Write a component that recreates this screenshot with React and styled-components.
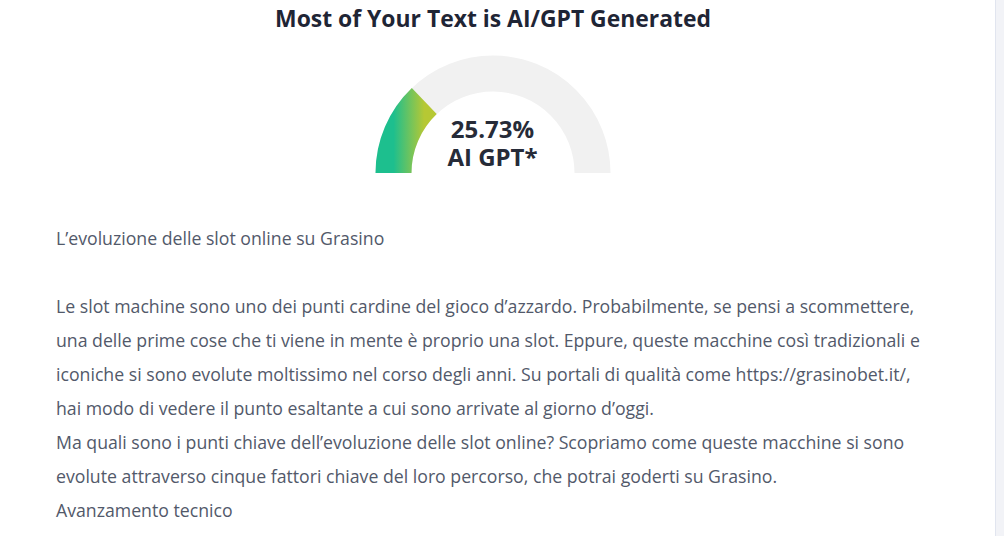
import React from "react";
import styled, { createGlobalStyle } from "styled-components";

const Global = createGlobalStyle`
  html, body { margin: 0; padding: 0; background: #ffffff; }
  body { font-family: "Open Sans", "Noto Sans", sans-serif; }
`;

const Page = styled.div`
  display: flex;
  width: 1004px;
  height: 536px;
  overflow: hidden;
`;

const Content = styled.main`
  flex: 1;
  display: flex;
  flex-direction: column;
  background: #ffffff;
`;

const Rail = styled.div`
  width: 8px;
  background: #f2f3f7;
  border-left: 1px solid #e1e5ef;
`;

const Title = styled.h1`
  margin: 4px 0 0;
  padding-right: 9px;
  text-align: center;
  font-size: 22.9px;
  line-height: 30px;
  font-weight: 700;
  color: #1f2535;
`;

const GaugeWrap = styled.div`
  position: relative;
  align-self: center;
  margin: 20px 10px 0 0;
  width: 236px;
  height: 119px;
`;

const GaugeLabel = styled.div`
  position: absolute;
  left: 0;
  right: 0;
  bottom: 2px;
  display: flex;
  flex-direction: column;
  align-items: center;
  font-size: 24px;
  line-height: 28px;
  font-weight: 700;
  color: #262b38;
`;

const Body = styled.div`
  margin: 48px 0 0 56px;
  width: 880px;
  font-size: 17.7px;
  line-height: 34px;
  color: #52596a;
`;

function Gauge({ value }) {
  const cx = 118, cy = 119, r = 99.5, w = 36;
  const ang = Math.PI - (value / 100) * Math.PI;
  const ex = cx + r * Math.cos(ang);
  const ey = cy - r * Math.sin(ang);
  return (
    <svg width="236" height="119" viewBox="0 0 236 119">
      <defs>
        <linearGradient id="gg" x1="0" y1="0" x2="1" y2="0">
          <stop offset="0" stopColor="#1dbf8e" />
          <stop offset="1" stopColor="#b6c834" />
        </linearGradient>
      </defs>
      <path d={`M ${cx - r} ${cy} A ${r} ${r} 0 0 1 ${cx + r} ${cy}`} fill="none" stroke="#f1f1f1" strokeWidth={w} />
      <path d={`M ${cx - r} ${cy} A ${r} ${r} 0 0 1 ${ex} ${ey}`} fill="none" stroke="url(#gg)" strokeWidth={w} />
    </svg>
  );
}

export default function App() {
  return (
    <Page>
      <Global />
      <Content>
        <Title>Most of Your Text is AI/GPT Generated</Title>
        <GaugeWrap>
          <Gauge value={25.73} />
          <GaugeLabel>
            <span>25.73%</span>
            <span>AI GPT*</span>
          </GaugeLabel>
        </GaugeWrap>
        <Body>
          L’evoluzione delle slot online su Grasino
          <br />
          <br />
          Le slot machine sono uno dei punti cardine del gioco d’azzardo. Probabilmente, se pensi a scommettere, una delle prime cose che ti viene in mente è proprio una slot. Eppure, queste macchine così tradizionali e iconiche si sono evolute moltissimo nel corso degli anni. Su portali di qualità come https://grasinobet.it/, hai modo di vedere il punto esaltante a cui sono arrivate al giorno d’oggi.
          <br />
          Ma quali sono i punti chiave dell’evoluzione delle slot online? Scopriamo come queste macchine si sono evolute attraverso cinque fattori chiave del loro percorso, che potrai goderti su Grasino.
          <br />
          Avanzamento tecnico
        </Body>
      </Content>
      <Rail />
    </Page>
  );
}
